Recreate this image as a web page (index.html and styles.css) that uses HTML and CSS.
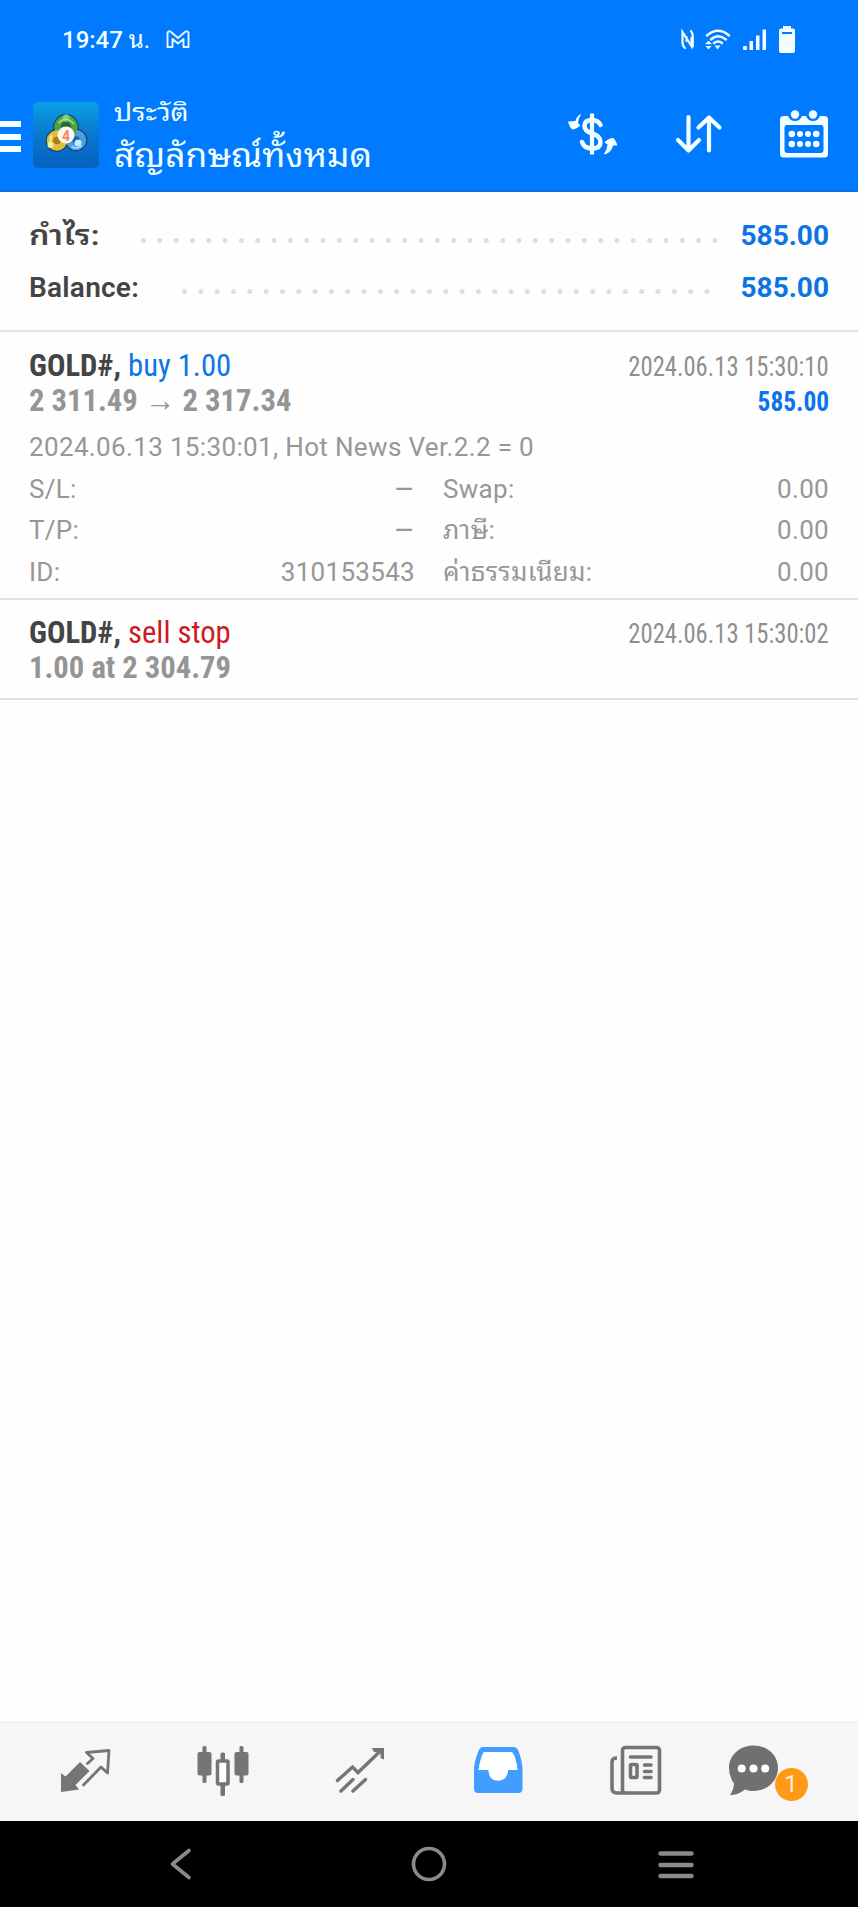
FILE: index.html
```
<!DOCTYPE html>
<html lang="th">
<head>
<meta charset="utf-8">
<title>ประวัติ</title>
<link rel="stylesheet" href="styles.css">
</head>
<body>
<div class="screen">
  <header class="header">
    <div class="status">
      <span class="clock">19:47 <span class="unit">น.</span></span>
      <svg class="mail" width="26" height="20" viewBox="165 28 26 20" fill="none" stroke="#e8f6ff" stroke-width="1.9" stroke-linejoin="round"><path d="M167.500 46V31.500Q169 29.500 171 31L178 37L185 31Q187 29.500 188.500 31.500V46H183.500V38L178 42.500L172.500 38V46Z"/></svg>
      <svg class="signals" width="120" height="30" viewBox="680 23 120 30">
        <g fill="none" stroke="#eef9ff" stroke-width="2.200" stroke-linecap="round">
          <path d="M687 47Q684.500 45 684.500 41V31L693.500 45V37M693 30Q694.800 32 694.800 36V45.500M688.500 40V36"/>
          <path stroke-width="2.500" d="M709 34.500Q720 25 731 34.500M713 38.500Q720 32 728 38.500M716 42Q720 39 724 42"/>
        </g>
        <g fill="#f4fcff"><path d="M707 43.200l3.500-3.700 3.500 3.700zM707.500 45h6l-3 3.500zM716.500 44.500h6l-3 4z"/>
          <rect x="745" y="45" width="4" height="4" rx="1"/><rect x="751.500" y="40" width="3.500" height="9"/><rect x="758" y="34.500" width="3.500" height="14.500"/><rect x="764.500" y="28.500" width="3.500" height="20.500"/>
          <path fill-rule="evenodd" d="M785 25h8v2.500h2q2 0 2 2V50q0 2-2 2h-12q-2 0-2-2V29.500q0-2 2-2h2zM784 31v2h10v-2z"/></g>
      </svg>
    </div>
    <div class="appbar">
      <div class="burger"><i></i><i></i><i></i></div>
      <svg class="logo" width="66" height="66" viewBox="0 0 66 66">
        <defs>
          <linearGradient id="bg" x1="0" y1="0" x2="0" y2="1"><stop offset="0" stop-color="#0a9fe8"/><stop offset=".5" stop-color="#0878cc"/><stop offset="1" stop-color="#0562c0"/></linearGradient>
        </defs>
        <rect width="66" height="66" rx="5" fill="url(#bg)"/>
        <g fill="none" stroke-width="8.500" stroke="#143f58">
          <circle cx="33" cy="25" r="8.500"/>
          <circle cx="24" cy="38.500" r="7"/>
          <circle cx="43" cy="38" r="7"/>
        </g>
        <g stroke-width="6.500">
          <circle cx="43" cy="38" r="7" fill="#1b5fae" stroke="#4a9fdf"/>
          <circle cx="33" cy="25" r="8.500" fill="#246b2c" stroke="#4fa348"/>
          <circle cx="24" cy="38.500" r="7" fill="#a67a14" stroke="#dfbd43"/>
        </g>
        <circle cx="33" cy="16" r="3.500" fill="#7fd07a"/><circle cx="17.500" cy="43" r="3" fill="#f8efa0"/><circle cx="45" cy="41" r="3.500" fill="#c4eaff"/>
        <path d="M25.500 21Q33 13 41 22" fill="none" stroke="#a8de8e" stroke-width="1.500"/>
        <path d="M19 33Q16.500 37 17.500 41" fill="none" stroke="#f8eca0" stroke-width="1.500"/>
        <path d="M49 43.500Q44 48 38.500 44.500" fill="none" stroke="#a9dcff" stroke-width="1.500"/>
        <circle cx="33" cy="33" r="8.500" fill="#fff8f2"/>
        <text x="33" y="38.500" class="logo-num" text-anchor="middle">4</text>
      </svg>
      <div class="titles"><div class="sub">ประวัติ</div><div class="main">สัญลักษณ์ทั้งหมด</div></div>
      <div class="actions">
        <svg width="50" height="48" viewBox="567 110 50 48">
          <g fill="none" stroke="#f2ffff" stroke-linecap="round">
            <path stroke-width="4.200" stroke-linecap="butt" d="M592 114.500V155.500"/>
            <path stroke-width="4.500" d="M600.500 126Q598 121 592 121Q584.500 121 584.500 127Q584.500 132 592 134.500Q600.500 137 600.500 143Q600.500 149.500 592 149.500Q584 149.500 582 143"/>
          </g>
          <path fill="#f2ffff" d="M581.500 114.500Q576.500 117 575.500 122L568 122.500Q570 130.500 573.500 130.500Q577 129.500 580.500 126.500L578 124Q578.500 118.500 581.500 114.500ZM603.500 155.500Q611.500 154 613 146.500L617.500 146.500Q616 142 613.500 139Q608 139 604.500 143.500L607.500 145.500Q607 151 603.500 155.500Z"/>
        </svg>
        <svg width="48" height="48" viewBox="675 110 48 48"><path d="M688.500 118V151.500M678 141L688.500 151.500L699 141M709 151.500V119M698.500 128.500L709 118.500L719.500 128.500" fill="none" stroke="#f2ffff" stroke-width="4.200" stroke-linecap="round" stroke-linejoin="round"/></svg>
        <svg width="48" height="50" viewBox="780 109 48 50" fill="#f2ffff">
          <path fill-rule="evenodd" d="M783.500 116H788Q790 121 795 121T802 116H806Q808 121 813 121T820 116H824.500Q828 116 828 119.500V154Q828 157.500 824.500 157.500H783.500Q780 157.500 780 154V119.500Q780 116 783.500 116ZM786.500 125Q784.500 125 784.500 127.500V150Q784.500 153 787.500 153H820.500Q823.500 153 823.500 150V127.500Q823.500 125 821.500 125Z"/>
          <circle cx="795" cy="114.500" r="4.200"/><circle cx="813" cy="114.500" r="4.200"/>
          <circle cx="791.800" cy="134" r="3.300"/><circle cx="800" cy="134" r="3"/><circle cx="808" cy="134" r="3"/><circle cx="816.200" cy="134" r="3.300"/>
          <circle cx="791.800" cy="144" r="3.300"/><circle cx="800" cy="144" r="3"/><circle cx="808" cy="144" r="3"/><circle cx="816.200" cy="144" r="3.300"/>
        </svg>
      </div>
    </div>
  </header>

  <main class="content">
    <section class="summary">
      <div class="sumrow"><span class="label thai">กำไร:</span><span class="dots first"></span><b>585.00</b></div>
      <div class="sumrow"><span class="label">Balance:</span><span class="dots second"></span><b>585.00</b></div>
    </section>
    <section class="deal open">
      <div class="line"><span class="title cond"><b>GOLD#,</b> <span class="buy">buy 1.00</span></span><span class="date cond">2024.06.13 15:30:10</span></div>
      <div class="line"><span class="price cond">2 311.49 <span class="arrow">→</span> 2 317.34</span><span class="profit cond">585.00</span></div>
      <div class="comment">2024.06.13 15:30:01, Hot News Ver.2.2 = 0</div>
      <div class="details">
        <span>S/L:</span><span class="val dash">–</span><span class="second-col">Swap:</span><span class="val">0.00</span>
        <span>T/P:</span><span class="val dash">–</span><span class="second-col">ภาษี:</span><span class="val">0.00</span>
        <span>ID:</span><span class="val">310153543</span><span class="second-col">ค่าธรรมเนียม:</span><span class="val">0.00</span>
      </div>
    </section>
    <section class="deal pending">
      <div class="line"><span class="title cond"><b>GOLD#,</b> <span class="sell">sell stop</span></span><span class="date cond">2024.06.13 15:30:02</span></div>
      <div class="line"><span class="price cond">1.00 at 2 304.79</span></div>
    </section>
  </main>

  <nav class="tabs">
    <svg width="54" height="56" viewBox="58 1743 54 56"><path fill="#757575" d="M80 1762L89.500 1771L75.500 1785L79 1789.500L61 1792V1773L65.500 1776.500Z"/><path fill="none" stroke="#757575" stroke-width="2.800" stroke-linejoin="round" stroke-linecap="round" d="M87.500 1763.500L93 1758.500L86.500 1752.500L109 1750.500L107.500 1773L101 1767L83.500 1785"/></svg>
    <svg width="54" height="56" viewBox="195.500 1743 54 56" fill="#757575"><rect x="202" y="1746" width="4" height="37" rx="1.500"/><rect x="197" y="1752" width="14" height="23.500" rx="2"/><rect x="239" y="1746" width="4" height="37" rx="1.500"/><rect x="234" y="1752" width="14" height="23.500" rx="2"/><rect x="220" y="1752.500" width="4.500" height="43.500" rx="1.500"/><rect x="217" y="1761" width="10.500" height="23" rx="1" fill="#fff" stroke="#757575" stroke-width="3.500"/></svg>
    <svg width="54" height="56" viewBox="333 1743 54 56" fill="none" stroke="#757575" stroke-width="3.400" stroke-linecap="round"><path d="M337.500 1780.500L352.500 1767L358 1772.500L382 1749.500"/><path d="M341 1791L353 1779.500M353 1791L365.500 1779.500"/><path fill="#757575" stroke="none" d="M372 1748H384V1759.500L380.500 1758V1753.500L373.500 1751.500Z"/></svg>
    <svg width="54" height="56" viewBox="471 1743 54 56"><path fill="#419dff" fill-rule="evenodd" d="M483 1747H513Q517 1747 518.500 1751Q522.500 1762 522.500 1770V1788.500Q522.500 1793 518 1793H478Q474 1793 474 1788.500V1770Q474 1762 478.500 1751Q480 1747 483 1747ZM484 1752Q481 1756 478.500 1770H488.500Q489 1780.500 498 1780.500T508 1770H517.500Q516 1757 512 1752Z"/><path fill="#fff" d="M484 1752Q481 1756 478.500 1770H488.500Q489 1780.500 498 1780.500T508 1770H517.500Q516 1757 512 1752Z"/></svg>
    <svg width="54" height="56" viewBox="609 1743 54 56" fill="none" stroke="#757575" stroke-width="3.600"><rect x="623.500" y="1747.500" width="37" height="45.500" rx="3"/><path d="M618 1758Q613 1758 613 1762V1788Q613 1793 618 1793H626"/><path stroke-linecap="round" d="M631.500 1757H652M645.500 1765H652M645.500 1771.500H652M645.500 1777.500H652"/><rect x="631.500" y="1764.500" width="6.500" height="13" rx="1"/></svg>
    <div class="chat">
      <svg width="54" height="56" viewBox="727 1743 54 56"><path fill="#707070" d="M754.500 1745.500C768 1745.500 779 1755 779 1768S768 1791 754.500 1791Q750 1791 746 1789.500Q739 1795 731 1795Q734.500 1790 735 1783.500Q730 1777 730 1768C730 1755 741 1745.500 754.500 1745.500Z"/><g fill="#fff"><circle cx="742.700" cy="1768.500" r="4"/><circle cx="754.500" cy="1768.500" r="4"/><circle cx="766.200" cy="1768.500" r="4"/></g></svg>
      <span class="badge">1</span>
    </div>
  </nav>
  <footer class="sysnav">
    <svg width="26" height="36" viewBox="168 1846 26 36"><path d="M189 1850.500L172.500 1864L189 1877.500" fill="none" stroke="#8a8a8a" stroke-width="3.600" stroke-linecap="round" stroke-linejoin="round"/></svg>
    <svg class="home" width="36" height="36" viewBox="0 0 36 36"><circle cx="18" cy="18" r="15.500" fill="none" stroke="#8a8a8a" stroke-width="3.600"/></svg>
    <svg width="36" height="36" viewBox="0 0 36 36"><path d="M2.500 7.500H33.500M2.500 19H33.500M2.500 30H33.500" stroke="#8a8a8a" stroke-width="4.500" stroke-linecap="round"/></svg>
  </footer>
</div>
</body>
</html>
```
FILE: styles.css
```
* { box-sizing: border-box; }
body { margin: 0; font-family: Roboto, "Noto Sans Thai Looped", "Noto Looped Thai", Loma, Waree, Garuda, "Noto Sans Thai", "Noto Sans", sans-serif; background: #fefefe; }
svg { display: block; flex: none; }
.screen { width: 858px; height: 1907px; display: flex; flex-direction: column; overflow: hidden; }

.header { height: 192px; flex: none; background: #007aff; border-bottom: 2px solid #0f6fdc; color: #f0ffff; }
.status { height: 78px; display: flex; align-items: center; padding: 0 60px 0 62px; }
.clock { width: 90px; padding-top: 2px; font-size: 24px; font-weight: 500; line-height: 30px; white-space: nowrap; }
.unit { font-weight: 400; }
.mail { margin-left: 13px; }
.signals { margin-left: auto; }
.appbar { height: 112px; display: flex; align-items: flex-start; padding-right: 30px; }
.burger { width: 21px; height: 31px; margin-top: 43px; display: flex; flex-direction: column; justify-content: space-between; }
.burger i { height: 6px; background: #f4ffff; }
.logo { margin: 24px 0 0 12px; }
.logo-num { font: 700 14px Roboto, sans-serif; fill: #ee8a5c; }
.titles { margin: 15px 0 0 15px; width: 260px; white-space: nowrap; }
.sub { font-size: 25px; line-height: 40px; transform: scaleX(1.13); transform-origin: left; }
.main { font-size: 33px; line-height: 46px; transform: scaleX(1.07); transform-origin: left; }
.actions { margin-left: auto; width: 261px; height: 114px; display: flex; justify-content: space-between; padding-top: 31px; }

.content { flex: 1; }
.summary { height: 140px; padding: 18px 29px 16px; border-bottom: 2px solid #e3e3e3; }
.sumrow { height: 52px; line-height: 52px; display: flex; font-size: 28px; }
.label { font-weight: 600; color: #444; letter-spacing: .25px; }
.thai { transform: scaleX(1.15); transform-origin: left; }
.sumrow b { color: #0d74e6; }
.dots { height: 5px; margin: 28px 23px 0 auto; background: radial-gradient(circle at 2.500px 2.500px, #dedede 2.200px, transparent 2.800px) 0 0 / 16.330px 5px repeat-x; }
.dots.first { width: 577px; }
.dots.second { width: 529px; margin-right: 30px; margin-top: 27px; }

.deal { padding: 16px 29px 0; border-bottom: 2px solid #e0e0e0; }
.open { height: 268px; }
.pending { height: 100px; padding-top: 15px; }
.line { display: flex; justify-content: space-between; align-items: baseline; height: 35px; line-height: 35px; white-space: nowrap; }
.cond { font-family: "Roboto Condensed", Roboto, sans-serif; font-stretch: 75%; transform: scaleX(.957); transform-origin: left; }
.title, .price { font-size: 32px; }
.title { color: #444; }
.buy { color: #0d74e6; }
.sell { color: #cc1a26; }
.price { font-weight: 700; color: #959595; }
.date { font-size: 27px; color: #8f8f8f; transform: scaleX(.912); transform-origin: right; }
.profit { font-size: 27px; font-weight: 700; color: #0d74e6; transform: scaleX(.94); transform-origin: right; }
.comment { margin-top: 9px; font-size: 26px; line-height: 41px; color: #979797; white-space: nowrap; letter-spacing: .35px; }
.details { display: grid; grid-template-columns: 85px 301px 220px 1fr; grid-auto-rows: 41.400px; line-height: 41.400px; padding-top: 1px; font-size: 26px; color: #979797; letter-spacing: .3px; white-space: nowrap; }
.val { text-align: right; }
.dash { font-size: 32px; }
.second-col { padding-left: 28px; }

.tabs { height: 100px; flex: none; background: #f6f6f6; border-top: 2px solid #f1f1f1; display: flex; align-items: flex-start; padding: 20px 0 0 58px; gap: 83.500px; }
.chat { position: relative; margin-left: -20px; }
.badge { position: absolute; left: 49px; top: 25px; width: 33px; height: 33px; border-radius: 50%; background: #ff9a17; color: #fff2d4; text-align: center; font-size: 24px; line-height: 33px; }
.sysnav { height: 86px; flex: none; background: #000; display: flex; align-items: center; justify-content: space-between; padding: 0 164px 0 168px; }
.home { margin-left: 6px; }
```
